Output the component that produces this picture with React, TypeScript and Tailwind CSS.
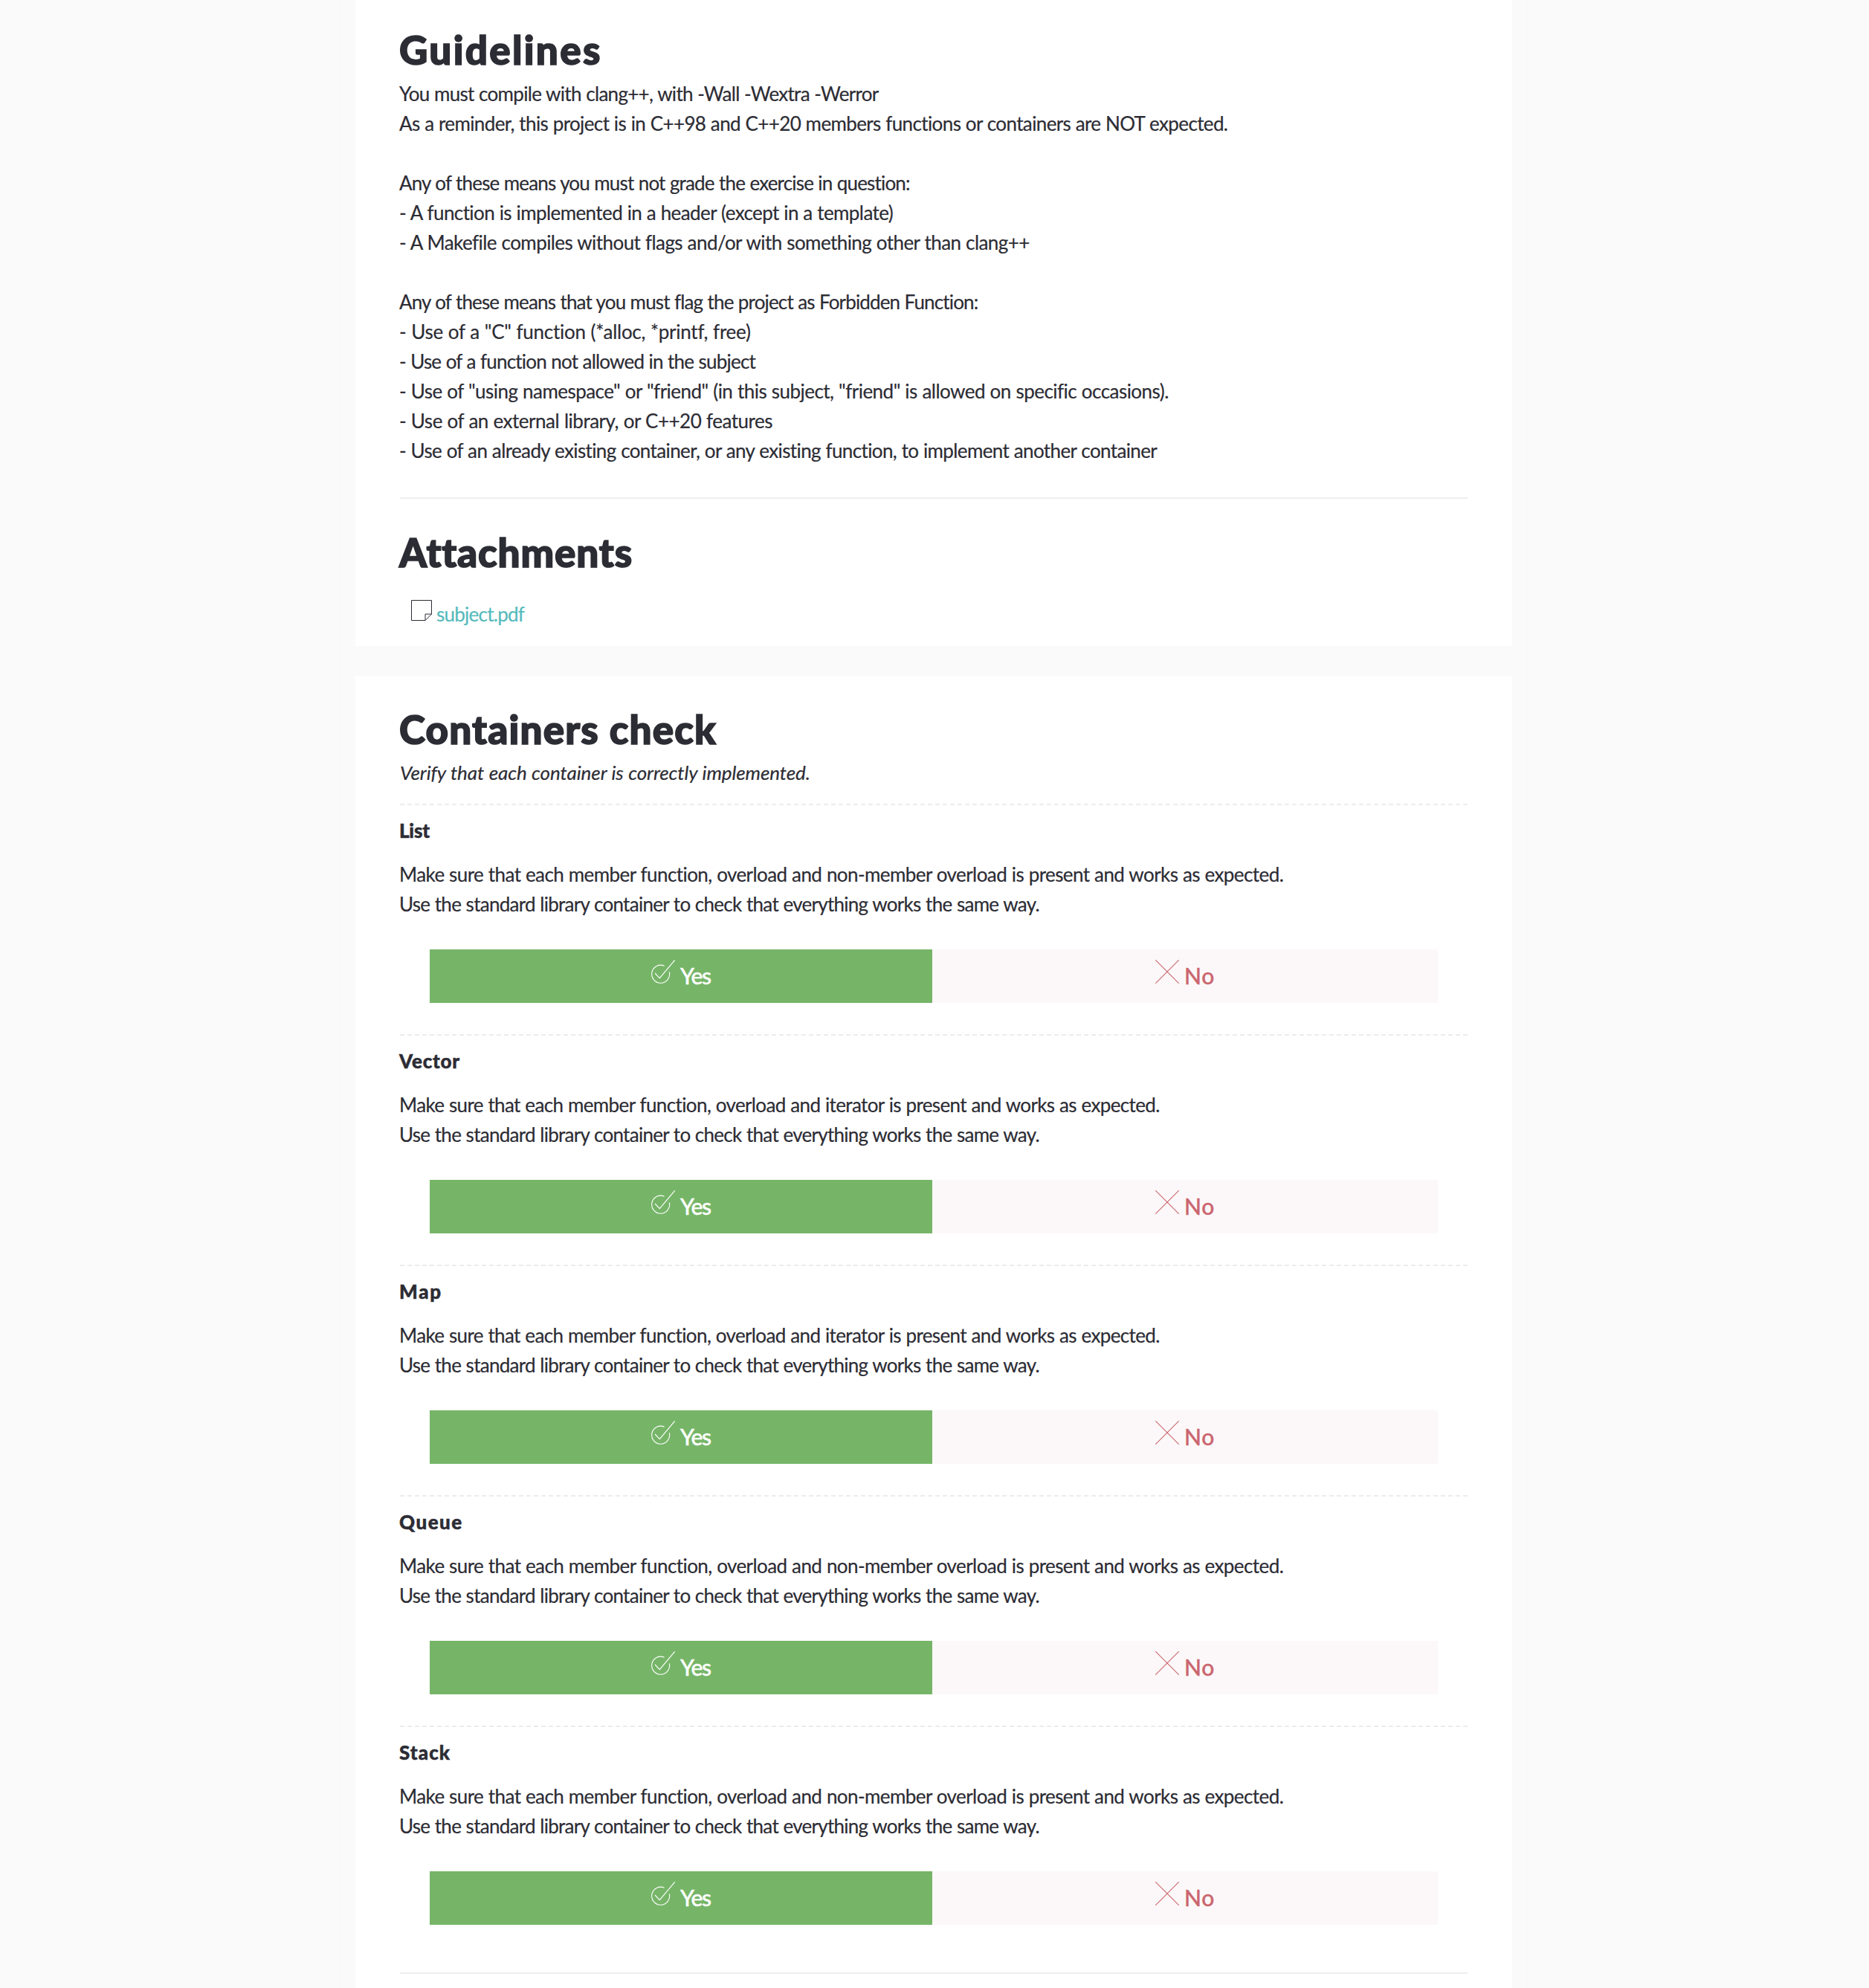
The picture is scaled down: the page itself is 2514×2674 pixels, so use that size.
type Line = { text: string; spacing: string };

const compileRules: Line[] = [
  { text: "You must compile with clang++, with -Wall -Wextra -Werror", spacing: "tracking-[-0.7px]" },
  {
    text: "As a reminder, this project is in C++98 and C++20 members functions or containers are NOT expected.",
    spacing: "tracking-[-0.62px]",
  },
];

const gradingRules: Line[] = [
  { text: "Any of these means you must not grade the exercise in question:", spacing: "tracking-[-0.83px]" },
  { text: "- A function is implemented in a header (except in a template)", spacing: "tracking-[-0.59px]" },
  {
    text: "- A Makefile compiles without flags and/or with something other than clang++",
    spacing: "tracking-[-0.57px]",
  },
];

const forbiddenRules: Line[] = [
  { text: "Any of these means that you must flag the project as Forbidden Function:", spacing: "tracking-[-0.85px]" },
  { text: '- Use of a "C" function (*alloc, *printf, free)', spacing: "tracking-[-0.27px]" },
  { text: "- Use of a function not allowed in the subject", spacing: "tracking-[-0.8px]" },
  {
    text: '- Use of "using namespace" or "friend" (in this subject, "friend" is allowed on specific occasions).',
    spacing: "tracking-[-0.53px]",
  },
  { text: "- Use of an external library, or C++20 features", spacing: "tracking-[-0.48px]" },
  {
    text: "- Use of an already existing container, or any existing function, to implement another container",
    spacing: "tracking-[-0.62px]",
  },
];

const nonMember: Line = {
  text: "Make sure that each member function, overload and non-member overload is present and works as expected.",
  spacing: "tracking-[-0.58px]",
};
const iterator: Line = {
  text: "Make sure that each member function, overload and iterator is present and works as expected.",
  spacing: "tracking-[-0.62px]",
};
const compare: Line = {
  text: "Use the standard library container to check that everything works the same way.",
  spacing: "tracking-[-0.72px]",
};

const checks: { name: string; spacing: string; line: Line }[] = [
  { name: "List", spacing: "tracking-[-0.2px]", line: nonMember },
  { name: "Vector", spacing: "tracking-[0.8px]", line: iterator },
  { name: "Map", spacing: "tracking-[1.7px]", line: iterator },
  { name: "Queue", spacing: "tracking-[1.5px]", line: nonMember },
  { name: "Stack", spacing: "tracking-[1.1px]", line: nonMember },
];

function Lines({ lines }: { lines: Line[] }) {
  return (
    <div className="-mb-px -ml-px pt-px text-[26px] leading-10 whitespace-nowrap [-webkit-text-stroke:0.2px_#2c2c34] [word-spacing:0.5px]">
      {lines.map((l) => (
        <p key={l.text} className={l.spacing}>
          {l.text}
        </p>
      ))}
    </div>
  );
}

function Heading({ text, spacing }: { text: string; spacing: string }) {
  return (
    <h1 className={`-ml-px text-[53px] leading-16 font-black [-webkit-text-stroke:1.6px_#2c2c34] ${spacing}`}>
      {text}
    </h1>
  );
}

function CheckIcon() {
  return (
    <svg className="h-8 w-8 shrink-0" viewBox="0 0 32 32" fill="none" stroke="currentColor" strokeWidth="1.1">
      <path d="M24.3 16.4A12 12 0 1 1 17.6 8.3" />
      <path d="M5 18l6.3 6.6L31.7 0.4" />
    </svg>
  );
}

function CrossIcon() {
  return (
    <svg className="h-8 w-8 shrink-0" viewBox="0 0 32 32" fill="none" stroke="currentColor" strokeWidth="1.1">
      <path d="M0.2 0.2l31.6 31.6M31.8 0.2L0.2 31.8" />
    </svg>
  );
}

function NoteIcon() {
  return (
    <svg className="h-7 w-7 shrink-0" viewBox="0 0 28 28" fill="none" stroke="#2c2c34" strokeWidth="1">
      <path d="M27.5 19V0.5H0.5V27.5H19L27.5 19H19V27.5" />
    </svg>
  );
}

function Answers() {
  return (
    <div className="mx-10 mt-[42px] mb-[42px] flex h-[72px] text-[30px] leading-10 font-medium">
      <button className="flex w-[676px] items-start justify-center gap-[7px] bg-[#76b568] pt-3.5 text-white">
        <CheckIcon />
        <span className="pt-px tracking-[-1.2px] [-webkit-text-stroke:0.4px_#fff]">Yes</span>
      </button>
      <button className="flex w-[680px] items-start justify-center gap-[7px] bg-[#fcf8f9] pt-3.5 text-[#cb666f]">
        <CrossIcon />
        <span className="pt-px tracking-[0.8px] [-webkit-text-stroke:0.4px_#cb666f]">No</span>
      </button>
    </div>
  );
}

export default function App() {
  return (
    <div className="h-[2674px] overflow-hidden bg-[#fafafa] font-['Lato',sans-serif] text-[#2c2c34]">
      <main className="ml-[456px] flex h-full w-[1600px] flex-col gap-10 border-x-2 border-[#f8f8f8] px-5">
        <section className="h-[869px] shrink-0 bg-white px-[60px] pt-[35px]">
          <Heading text="Guidelines" spacing="tracking-[2.3px]" />
          <div className="mt-1.5 flex flex-col gap-10">
            <Lines lines={compileRules} />
            <Lines lines={gradingRules} />
            <Lines lines={forbiddenRules} />
          </div>
          <hr className="mt-11 mb-10 h-0.5 border-0 bg-[#eeeeee]" />
          <Heading text="Attachments" spacing="tracking-[0.85px]" />
          <div className="mt-[30px] ml-[15px] flex items-start gap-1.5 pt-0.5">
            <NoteIcon />
            <a className="-mt-px text-[26px] leading-10 tracking-[-0.75px] text-[#55babc] [-webkit-text-stroke:0.2px_#55babc]">
              subject.pdf
            </a>
          </div>
        </section>

        <section className="grow bg-white px-[60px] pt-10">
          <Heading text="Containers check" spacing="tracking-[1.15px]" />
          <p className="mt-1.5 mb-[22px] text-[26px] leading-10 tracking-[-0.08px] italic [-webkit-text-stroke:0.2px_#2c2c34] [word-spacing:0.5px]">
            Verify that each container is correctly implemented.
          </p>
          {checks.map((c) => (
            <article key={c.name}>
              <div className="h-0.5 bg-[repeating-linear-gradient(90deg,#ececec_0_6px,transparent_6px_10px)]" />
              <h4
                className={`-ml-px mt-3.5 mb-[18px] text-[26px] leading-10 font-black [-webkit-text-stroke:0.5px_#2c2c34] ${c.spacing}`}
              >
                {c.name}
              </h4>
              <Lines lines={[c.line, compare]} />
              <Answers />
            </article>
          ))}
          <hr className="mt-16 h-0.5 border-0 bg-[#eeeeee]" />
        </section>
      </main>
    </div>
  );
}
